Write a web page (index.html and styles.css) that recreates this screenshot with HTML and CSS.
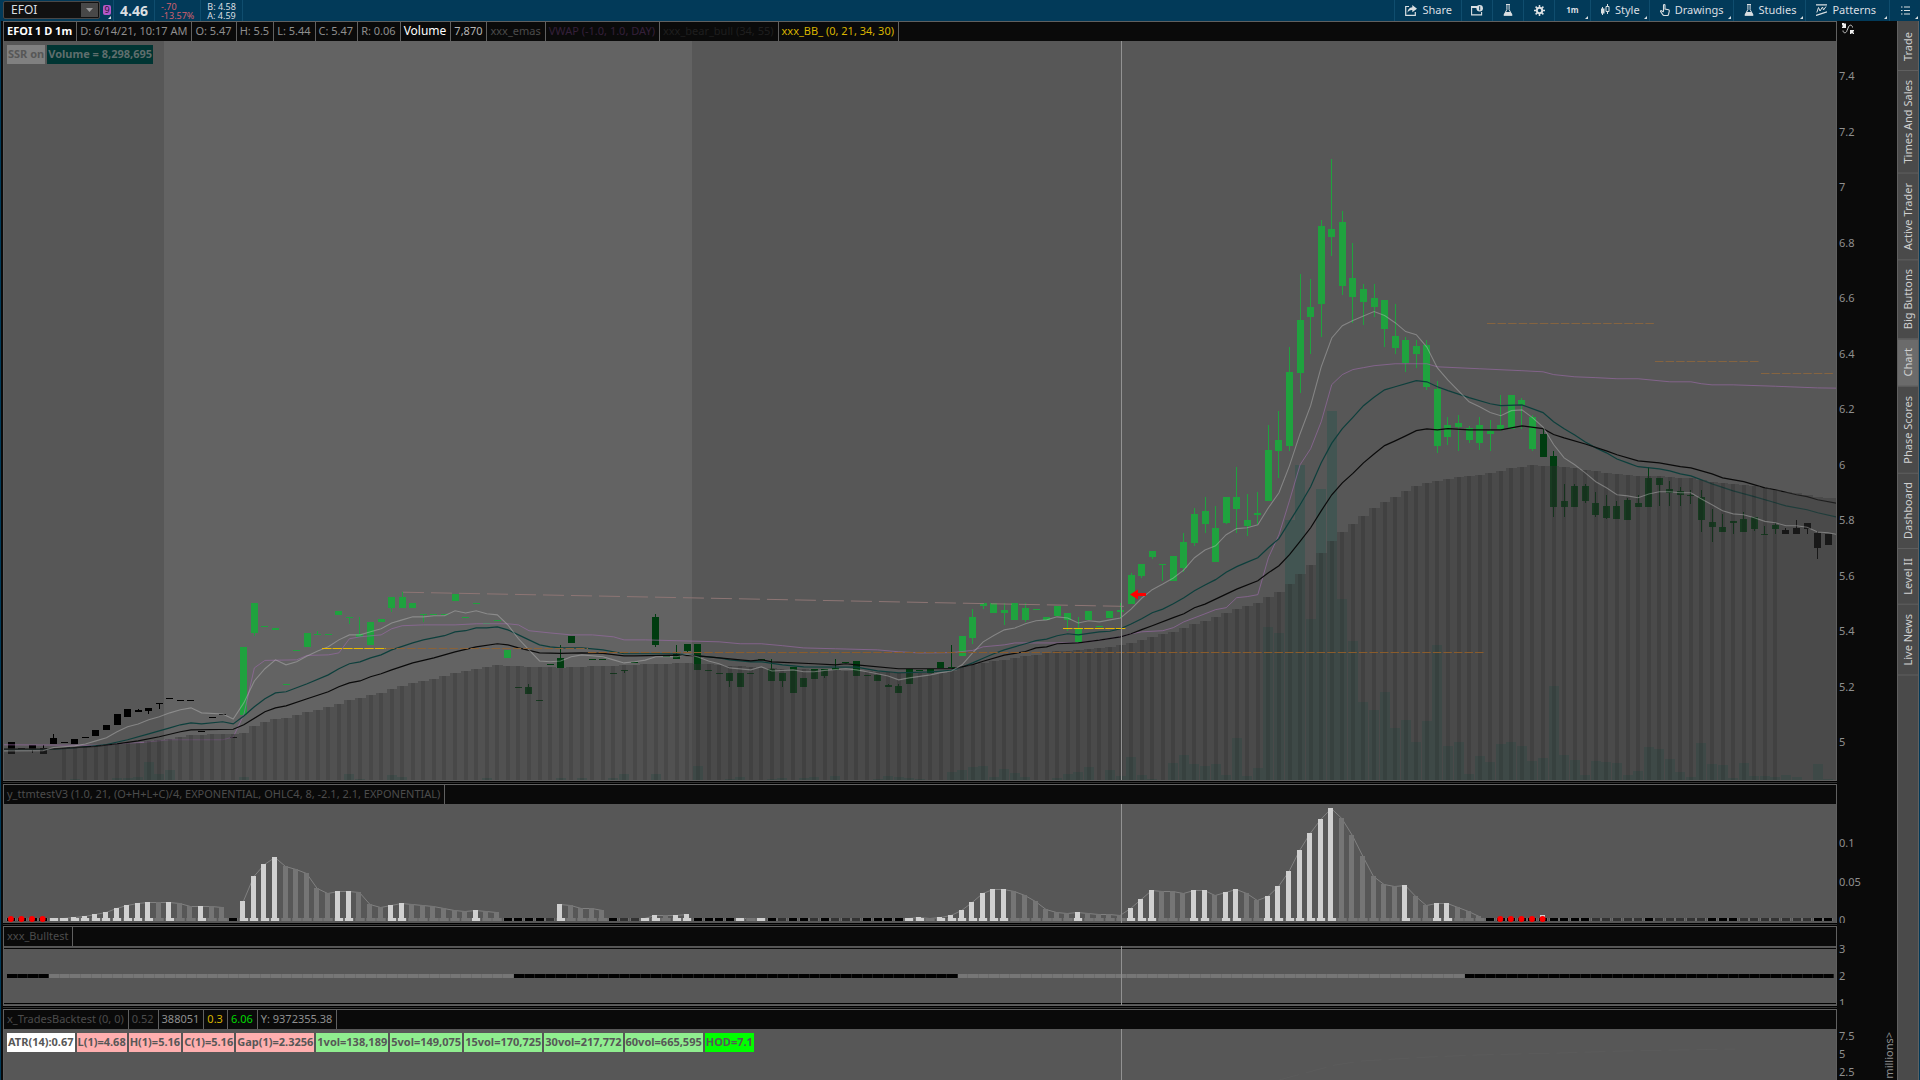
FILE: index.html
```html
<!DOCTYPE html>
<html lang="en">
<head>
  <meta charset="UTF-8">
  <title>EFOI 1 D 1m</title>
  <link rel="stylesheet" href="styles.css">
</head>
<body>
  <header class="topbar">
    <div class="symbol">
      <input type="text" value="EFOI" aria-label="Symbol">
      <button class="symbol-drop" aria-label="Recent symbols"><svg width="7" height="4" viewBox="0 0 7 4"><path d="M0 0h7L3.5 4z" fill="#999"/></svg></button>
    </div>
    <button class="link-badge" aria-label="Symbol link 9"><span>9</span></button>
    <div class="quote last">4.46</div>
    <div class="quote change"><span>-.70</span><span>-13.57%</span></div>
    <div class="quote bidask"><span>B: 4.58</span><span>A: 4.59</span></div>

    <nav class="tools">
      <button class="tool share">
        <svg width="12" height="11" viewBox="0 0 12 11"><path d="M4 1.5H.7v8.8h9.6V7" fill="none" stroke="currentColor" stroke-width="1.2"/><path d="M7.3 0L12 3.7 7.3 7.2V5.1C4.9 5 3.600 5.800 2.500 7.700 2.600 4.600 4.200 2.500 7.300 2.200z" fill="currentColor"/></svg>
        Share
      </button>
      <button class="tool icon" aria-label="Detach">
        <svg width="12" height="11" viewBox="0 0 12 11"><path d="M5.500 1.600H.6v8.300h10V7" fill="none" stroke="currentColor" stroke-width="1.1"/><path d="M0 1h6v2H0z" fill="currentColor"/><circle cx="8.700" cy="3.200" r="3.200" fill="currentColor"/><path d="M8.200 1.200h1v4h-1z" fill="#023a59"/></svg>
      </button>
      <button class="tool icon" aria-label="Edit studies">
        <svg width="10" height="12" viewBox="0 0 10 12"><path d="M3 .5h4M3.900.5v5L1 11h8L6.100 5.500v-5" fill="none" stroke="currentColor"/><path d="M2.400 8h5.200L9.500 11.800H.5z" fill="currentColor"/></svg>
      </button>
      <button class="tool icon" aria-label="Settings">
        <svg width="11" height="11" viewBox="0 0 11 11"><circle cx="5.500" cy="5.500" r="2.700" fill="none" stroke="currentColor" stroke-width="2"/><path d="M5.500 0v2M5.500 9v2M0 5.500h2M9 5.500h2M1.600 1.600l1.500 1.500M7.900 7.900l1.500 1.500M1.600 9.400l1.500-1.500M7.900 3.100l1.500-1.500" stroke="currentColor" stroke-width="1.500"/></svg>
      </button>
      <button class="tool menu frame">1m</button>
      <button class="tool menu">
        <svg width="9" height="12" viewBox="0 0 9 12"><path d="M1.500 3v8M6.500 0v10" stroke="currentColor"/><path d="M0 4.500h3.500v5H0z" fill="currentColor"/><path d="M5 2.500h3v5H5z" fill="#023a59" stroke="currentColor"/></svg>
        Style
      </button>
      <button class="tool menu">
        <svg width="10" height="12" viewBox="0 0 10 12"><path d="M3.500 7.500V1.300c0-1 1.500-1 1.500 0V5l3.500.8c.7.200.9.700.8 1.300L8.500 10.500c-.2.700-.5 1-1.200 1H4.200c-.6 0-1-.3-1.300-.7L.6 7.600c-.3-.8.600-1.300 1.200-.8l1.700 1.400" fill="none" stroke="currentColor" stroke-width="1.100"/></svg>
        Drawings
      </button>
      <button class="tool menu">
        <svg width="10" height="12" viewBox="0 0 10 12"><path d="M3 .5h4M3.900.5v5L1 11h8L6.100 5.500v-5" fill="none" stroke="currentColor"/><path d="M2.400 8h5.200L9.500 11.800H.5z" fill="currentColor"/></svg>
        Studies
      </button>
      <button class="tool menu patterns">
        <svg width="11" height="12" viewBox="0 0 11 12"><path d="M0 .8h11M0 11.500l11-3.700" stroke="currentColor" stroke-width="1.200"/><path d="M.8 8.500L2.500 3.500 4 7l2.500-4L7.500 6 10 2.500" fill="none" stroke="currentColor"/></svg>
        Patterns
      </button>
      <button class="tool menu icon" aria-label="Menu">
        <svg width="9" height="9" viewBox="0 0 9 9"><path d="M0 1h1.500M3 1h6M0 4.500h1.500M3 4.500h6M0 8h1.500M3 8h6" stroke="currentColor" stroke-width="1.200"/></svg>
      </button>
    </nav>
  </header>

  <div class="workspace">
    <main class="charts">
      <section class="panel price">
        <div class="left">
          <div class="legend">
            <span class="title">EFOI 1 D 1m</span>
            <span>D: 6/14/21, 10:17 AM</span>
            <span>O: 5.47</span>
            <span>H: 5.5</span>
            <span>L: 5.44</span>
            <span>C: 5.47</span>
            <span>R: 0.06</span>
            <span class="white">Volume</span>
            <span class="light">7,870</span>
            <span class="dim">xxx_emas</span>
            <span class="vwap">VWAP (-1.0, 1.0, DAY)</span>
            <span class="faint">xxx_bear_bull (34, 55)</span>
            <span class="yellow">xxx_BB_ (0, 21, 34, 30)</span>
          </div>
          <div class="plot">
            <svg id="price" viewBox="0 0 1832 739" preserveAspectRatio="none"></svg>
            <div class="chips">
              <span class="chip ssr">SSR on</span>
              <span class="chip vol">Volume = 8,298,695</span>
            </div>
          </div>
        </div>
        <div class="axis">
          <svg class="fit" width="12" height="12" viewBox="0 0 12 12"><path d="M0 0h2l1 1 1-1v5H0V4l1-1-1-1z" fill="#eee"/><path d="M8 7h4v1l-1 1 1 1v1h-1l-1-1-1 1H8z" fill="#eee"/><path d="M1 7.500c0 3 3.500 3 4 0L6.500 4c1-3 4-2 4 .5" fill="none" stroke="#ccc"/></svg>
          <span>7.4</span><span>7.2</span><span>7</span><span>6.8</span><span>6.6</span><span>6.4</span><span>6.2</span><span>6</span><span>5.8</span><span>5.6</span><span>5.4</span><span>5.2</span><span>5</span>
        </div>
      </section>

      <div class="divider"></div>

      <section class="panel ttm">
        <div class="left">
          <div class="legend">
            <span class="dim">y_ttmtestV3 (1.0, 21, (O+H+L+C)/4, EXPONENTIAL, OHLC4, 8, -2.1, 2.1, EXPONENTIAL)</span>
          </div>
          <div class="plot">
            <svg id="ttm" viewBox="0 0 1832 119" preserveAspectRatio="none"></svg>
          </div>
        </div>
        <div class="axis"><span>0.1</span><span>0.05</span><span>0</span></div>
      </section>

      <div class="divider"></div>

      <section class="panel bull">
        <div class="left">
          <div class="legend"><span class="dim">xxx_Bulltest</span></div>
          <div class="plot">
            <svg id="bull" viewBox="0 0 1832 60" preserveAspectRatio="none"></svg>
          </div>
        </div>
        <div class="axis"><span>3</span><span>2</span><span>1</span></div>
      </section>

      <div class="divider"></div>

      <section class="panel trades">
        <div class="left">
          <div class="legend">
            <span class="dim">x_TradesBacktest (0, 0)</span>
            <span class="dim">0.52</span>
            <span>388051</span>
            <span class="yellow">0.3</span>
            <span class="green">6.06</span>
            <span>Y: 9372355.38</span>
          </div>
          <div class="plot">
            <svg id="trades" viewBox="0 0 1832 51" preserveAspectRatio="none"></svg>
            <div class="chips">
              <span class="chip atr">ATR(14):0.67</span>
              <span class="chip pink">L(1)=4.68</span>
              <span class="chip pink">H(1)=5.16</span>
              <span class="chip pink">C(1)=5.16</span>
              <span class="chip pink">Gap(1)=2.3256</span>
              <span class="chip mint">1vol=138,189</span>
              <span class="chip mint">5vol=149,075</span>
              <span class="chip mint">15vol=170,725</span>
              <span class="chip mint">30vol=217,772</span>
              <span class="chip mint">60vol=665,595</span>
              <span class="chip hod">HOD=7.1</span>
            </div>
          </div>
        </div>
        <div class="axis"><span>7.5</span><span>5</span><span>2.5</span><em>millions&gt;</em></div>
      </section>
    </main>

    <aside class="tabs">
      <button>Trade</button>
      <button>Times And Sales</button>
      <button>Active Trader</button>
      <button>Big Buttons</button>
      <button class="active">Chart</button>
      <button>Phase Scores</button>
      <button>Dashboard</button>
      <button>Level II</button>
      <button>Live News</button>
    </aside>
  </div>

  <script src="script.js"></script>
</body>
</html>
```
FILE: styles.css
```css
* {
  box-sizing: border-box;
}

body {
  margin: 0;
  height: 100vh;
  overflow: hidden;
  display: flex;
  flex-direction: column;
  background: #0a0a0a;
  color: #8f8f8f;
  font-family: "Noto Sans", "Open Sans", sans-serif;
  font-size: 11px;
  line-height: 16px;
}

button, input {
  font: inherit;
  color: inherit;
  margin: 0;
}

button {
  border: none;
  background: none;
  padding: 0;
}

/* top bar */
.topbar {
  display: flex;
  flex: none;
  height: 21px;
  background: #023a59;
  color: #dadfe2;
}

.symbol {
  display: flex;
  width: 97px;
  height: 18px;
  margin: 1px 0 0 3px;
  background: #111;
  border: 1px solid #484848;
  border-radius: 2px;
}

.symbol input {
  flex: 1;
  min-width: 0;
  padding: 0 0 0 7px;
  border: none;
  background: none;
  font-size: 12px;
}

.symbol-drop {
  width: 17px;
  height: 14px;
  margin: 1px;
  background: #484848;
  display: flex;
  align-items: center;
  justify-content: center;
}

.link-badge {
  position: relative;
  width: 14px;
  border-right: 1px solid #0f4d6e;
}

.link-badge span {
  display: block;
  width: 8px;
  height: 10px;
  margin: -2px 0 0 3px;
  background: #b457c8;
  border-radius: 2px;
  color: #2c1435;
  font-size: 9px;
  line-height: 10px;
}

.link-badge::after,
.menu::after {
  content: "";
  position: absolute;
  right: 2px;
  bottom: 2px;
  border-left: 3px solid transparent;
  border-bottom: 3px solid #dadfe2;
}

.quote {
  display: flex;
  flex-direction: column;
  justify-content: center;
  padding: 0 6px;
  border-right: 1px solid #0f4d6e;
}

.quote span {
  font-size: 9px;
  line-height: 9px;
}

.last {
  font-size: 14px;
  font-weight: bold;
}

.change {
  color: #d2606e;
}

.tools {
  display: flex;
  margin-left: auto;
}

.tool {
  position: relative;
  display: flex;
  align-items: center;
  gap: 5px;
  padding: 0 9px 1px 10px;
  border-left: 1px solid #0f4d6e;
}

.tool.patterns {
  padding-right: 13px;
}

.tool.icon {
  width: 31px;
  justify-content: center;
  padding: 0 0 1px;
}

.tool.frame {
  width: 36px;
  justify-content: center;
  padding: 0 0 1px;
  font-size: 8px;
  font-weight: bold;
}

/* layout */
.workspace {
  flex: 1;
  min-height: 0;
  display: flex;
  padding: 0 1px;
  background: #023a59;
}

.charts {
  flex: 1;
  min-width: 0;
  display: flex;
  flex-direction: column;
  padding-left: 2px;
  background: #0a0a0a;
}

.panel {
  display: flex;
  flex: none;
}

.price {
  flex: 1;
  min-height: 0;
}

.ttm {
  height: 139px;
}

.bull {
  height: 80px;
}

.trades {
  height: 71px;
}

.left {
  flex: 1;
  min-width: 0;
  display: flex;
  flex-direction: column;
  border: 1px solid #606060;
  border-bottom: none;
}

.price .left,
.bull .left {
  border-bottom: 1px solid #606060;
}

.divider {
  height: 3px;
  margin-right: 60px;
  background: #303030;
  border-top: 1px solid #000;
  border-bottom: 1px solid #000;
}

.legend {
  display: flex;
  flex: none;
  height: 19px;
  line-height: 18px;
  white-space: nowrap;
}

.legend span {
  padding: 0 4px 0 3px;
  border-right: 1px solid #606060;
}

.legend .title {
  color: #fff;
  font-weight: bold;
}

.legend .white {
  color: #fff;
  font-size: 12px;
}

.legend .light {
  color: #b5b5b5;
}

.legend .dim {
  color: #4c4c4c;
}

.legend .vwap {
  color: #35203a;
}

.legend .faint {
  color: #1f1f1f;
}

.legend .yellow {
  color: #d8b400;
}

.legend .green {
  color: #00d800;
}

.plot {
  position: relative;
  flex: 1;
  min-height: 0;
  background: #575757;
}

.plot svg {
  display: block;
  position: absolute;
  width: 100%;
  height: 100%;
}

.chips {
  position: relative;
  display: flex;
  gap: 2px;
  padding: 4px 3px;
  white-space: nowrap;
}

.chip {
  height: 19px;
  padding: 0 1px;
  color: #575757;
  font-weight: bold;
  line-height: 18px;
}

.ssr {
  background: #808080;
}

.vol {
  background: #003533;
  color: #5f6e6d;
}

.atr {
  background: #fff;
}

.pink {
  background: #ffafaf;
}

.mint {
  background: #90ee90;
}

.hod {
  background: #0f0;
}

/* axis labels */
.axis {
  position: relative;
  width: 60px;
  padding-left: 2px;
  display: flex;
  flex-direction: column;
  justify-content: space-between;
  overflow: hidden;
}

.price .axis {
  padding-top: 47px;
  padding-bottom: 31px;
}

.ttm .axis {
  padding-top: 51px;
  padding-bottom: 0;
}

.ttm .axis span:last-child {
  margin-bottom: -5px;
}

.bull .axis {
  padding-top: 20px;
  margin-bottom: 1px;
}

.bull .axis span:first-child {
  margin-top: -5px;
}

.bull .axis span:nth-child(3) {
  margin-bottom: -6px;
}

.trades .axis {
  padding-top: 19px;
}

.axis .fit {
  position: absolute;
  left: 5px;
  top: 2px;
}

.axis em {
  position: absolute;
  right: 0;
  top: 23px;
  font-style: normal;
  writing-mode: vertical-rl;
  transform: rotate(180deg);
}

/* side tabs */
.tabs {
  display: flex;
  flex-direction: column;
  width: 22px;
  padding-top: 2px;
  border-left: 1px solid #606060;
  border-right: 1px solid #606060;
  background: #4a4a4a;
  color: #d0d0d0;
}

.tabs button {
  writing-mode: vertical-rl;
  transform: rotate(180deg);
  width: 20px;
  padding: 9px 0;
  border-top: 1px solid #606060;
}

.tabs .active {
  background: #6b6b6b;
}
```
FILE: script.js
```js
const NS = "http://www.w3.org/2000/svg";
const STEP = 10.563;
const barX = i => 7.4 + i * STEP;
// prices are in cents, 5.50 sits at 562px
const priceY = c => 562.3 - (c - 550) * 2.775;

function add(svg, tag, attrs) {
  const el = document.createElementNS(NS, tag);
  for (const key in attrs) el.setAttribute(key, attrs[key]);
  svg.appendChild(el);
  return el;
}

function rect(svg, x, y, w, h, fill, opacity) {
  return add(svg, "rect", { x: Math.round(x), y: Math.round(y), width: w, height: Math.round(h), fill, "fill-opacity": opacity || 1, "shape-rendering": "crispEdges" });
}

function hline(svg, x1, x2, y, color, dash) {
  add(svg, "line", { x1, x2, y1: Math.floor(y) + 0.5, y2: Math.floor(y) + 0.5, stroke: color, "stroke-dasharray": dash || "none" });
}

function crosshair(svg) {
  add(svg, "line", { x1: 1117.5, x2: 1117.5, y1: 0, y2: 800, stroke: "#929292" });
}

// "index:value" pairs
const parse = text => text.trim().split(/\s+/).map(p => p.split(":").map(Number));

function valueAt(points, i) {
  for (let k = 1; k < points.length; k++) {
    const [a, va] = points[k - 1];
    const [b, vb] = points[k];
    if (i <= b) return va + (vb - va) * (i - a) / (b - a);
  }
  return points[points.length - 1][1];
}

// one entry per bar: close, or top/bottom, or high/top/bottom/low
const candles = `
500/496 498/497.7 499/499/497.5/496 499/498/496/496 503/501.5/499.7/499.7 500 501/499.7 502 504.3/502.5 506/504.7
510/506.5 512/509.3 512/511.5/511.2/511.2 512.3/512.3/511.5/510 514/514/514/512 516 515 515 504 509
510 502 534.2/510 550/550/539.5/538 542 541/540.7 521 533 539.3/534.5 540/539/539/539
539 547.2/546 545/545/545/542.5 545/539/538.3/538.3 543.3/535.5 544.3/543.5 552.3/552.3/548.5/547 554/552.3/548.5/548.5 550/548.5 546/546/546/543
546 546 553.3/551.3 545 550 543 544 533.2/530.5 520 521/520/517.5/517.5
515 528 535/530.3/527/527 538.2/536 - 530 530 525 526/526/526/525 529
- 546/545/535.4/534 531 535/531.7/530.3/530.3 535.3/535.3/533/532 535.3/526.3 526 525 525/525/522.3/520 525/520.3
525 530 530/526.3/522.3/522.3 525/525/522.3/520 527/518 523/520.3 526.3/523.2 526.3/526.3/524/523 530/526.7/526.3/526.3 529
529.2/524.2 524 524/522.4 521/520.5/520.2/520.2 521/520.2/518/518 526.3/521.2 526 526.3/525.2 529/527 535/527/527/527
538.2/531.4 548/545/537.7/535.5 550/550/549.3/548 550/547 550/547.6/547/542 550/544.3 550/548.3/544.3/543 548 545/544.4 549/545.8
546.5/546.5/544.4/540 545/541/536.4/536.4 547.2/544.3 542 547.2/545 550/547.6/547.2/544.5 561/560.2/550/550 564.2/564.2/560.2/559 569/569/567/566 564/564/564/558
567/558.3 575.3/572/563/561.3 584.3/582.2/572/570.6 588.2/583.3/579/575.3 585/577/565.3/565.3 588.3/588.3/579.3/578.4 599/588.3/584.3/575.3 589.3/580/578.3/574.2 590/582.6/582.3/578.3 614.3/605.3/587.3/587.3
619.2/609/605.3/595 642.3/633.4/607/605 668.8/652/633.3/626 667/656.8/653.4/640 688/686/658.2/646 710/685/682.3/675 691.3/687.4/664.6/661 680/667.2/660.6/651.3 665/663.3/659/650.2 665/660/657.3/653
659.3/659.3/649.2/642.3 658/646.3/642.3/640 646/645/637/633.3 645/642.7/640.2/635 645/643/628.3/627 630/627.2/607/604 617/614.3/610.3/607 618/615/614/605 614/613.2/609.3/608 617/614.3/608/605
616/612/611.3/605 625/614.3/613.3/612 625/613.3 624/623.3/622/613 618/617/606/605 613/611/603.2/603.2 604.8/603/585/581 593/587/585/581 593/592.3/585/585 593/592.3/587.3/586
590/586/582.3/581 589/585/581/580.5 587/585/580.6/580.6 588/587.2/580.2/580.2 589/586/585/585 599/595/585/585 595/595/593/585 594/591.2/590/585 592/590.5/589.3/585 591/589/589/586
591/588.3/580.2/576 584/579.3/578/572 582/577.5/576/576 579.7/579.7/579.2/575 583/580.4/576/576 581/581/577.3/576 578/575/575/575 579/578.2/577/575 577/576.4/575.3/575.3 580/577/575.3/575.3
579/579/577.3/575 576/575.3/570.2/566 575/571.3`.trim().split(/\s+/);

function candleColor(i) {
  if (i < 22 || i > 167) return "#000";
  if ((i > 47 && i < 90) || i > 144) return "#003c10";
  return "#1fa23e";
}

const fast = parse(`-1:497 3:497.1 4:498.2 6:498.8 7:499.5 8:500.6 9:501.7 10:503.9 11:505.7 12:506.7 13:508.2 14:509.3 15:510.7 16:511.8 17:512.5
18:510.7 20:510.3 21:508.5 22:514.3 23:522.2 24:526.6 25:529.8 26:528 27:529.1 28:531.2 29:533 30:534.5 31:537 32:538.8 33:538.8 34:539.9 35:541
36:543.1 37:544.2 38:545.3 39:545.3 40:545.7 41:545.7 42:547.5 43:546.7 44:547.5 45:546.4 46:546 47:542.4 48:537.4 49:533.4 50:529.4 51:529.1 52:529.4
53:530.9 54:531.6 56:530.9 57:529.8 58:528.7 59:529.1 60:529.7 61:530.9 63:530.9 64:531.8 65:530.8 66:529.4 67:528.4 68:526.9 70:526.2 71:527.3 72:525.8
74:526.2 75:525.5 76:525.5 77:526 79:526.6 80:526.2 81:525.5 82:524.8 83:524 84:522.6 85:523.3 87:524.4 88:525.2 89:525.8 90:528 91:532.3 92:536.3
93:538.6 94:540.6 95:541.3 96:542.8 97:543.9 98:544.2 99:545.3 100:544.9 101:543.1 102:543.9 103:543.5 104:544.2 105:544.9 106:548.1 107:552 108:555.1
109:557.1 110:559.3 111:562.2 112:566.6 113:569.4 114:570.9 115:574.9 116:577.1 117:577.4 118:578.5 119:584.6 120:590 121:599.8 122:611.3 123:621.4
124:635.4 125:645.8 126:650.2 127:652.1 128:653.7 129:655.3 130:653.9 131:651.3 132:648.1 133:647 134:642.5 135:635 136:630.6 137:626.7 138:622.8
139:621 140:618.9 141:617.8 142:619.6 143:619.9 144:617.1 145:613.7 146:607.4 147:602.6 148:600.1 149:597.2 150:594 151:591.8 152:589.3 153:588.9
154:588.2 155:589.6 156:590.4 157:590.4 158:590 159:590 160:587.8 161:585.7 162:583.5 163:582.4 164:582.1 165:581 166:579.7 167:579.2 168:578.1
169:578.1 170:577.6 171:575.9 172:575.6 173:574.9`);

const mid = parse(`-1:497.4 4:497.5 6:498.1 9:499.3 11:501 13:503.1 15:505.3 16:506.4 17:507.1 18:506.7 20:507.5 21:506.7 22:509.6 23:512.9 24:515.8
25:517.9 26:518.3 28:521.2 30:524.4 31:526.6 32:528.4 33:529.1 34:530.5 35:531.6 36:533.4 38:535.9 39:537 41:538.5 42:539.9 43:540.3 44:541.3 45:541.3
46:541.7 47:540.6 48:538.8 50:535.2 51:534.5 52:534.1 54:534.1 56:533.4 58:532 63:532 65:531.2 67:530.5 68:529.8 70:529.1 71:529.1 73:528 75:527.3
80:527.2 82:525.8 84:525.1 87:525.5 89:526 90:527.2 91:528.7 92:530.4 93:532 94:533.4 96:535.6 97:536.7 98:537.3 99:538.5 100:539.2 101:538.8 103:539.9
104:540.1 105:541 106:542.7 107:544.6 108:546.8 109:548.1 110:550 111:552.2 112:554.7 113:556.8 114:558.7 115:561.4 116:563.4 117:565 118:566.6
119:570.2 120:573.5 121:579.6 122:585.7 123:592.2 124:600.8 125:607.9 126:613.1 127:617.2 128:621.4 129:624.4 130:627.1 131:628.2 133:630.4 134:630
135:628.2 136:626.8 138:624.3 140:622.1 141:621.4 143:621.7 145:618.9 146:615.6 147:613.1 148:610.8 149:608.3 150:606.2 151:604.4 152:602.2 153:600.8
154:599.4 156:598.6 157:597.9 158:596.8 159:596.1 161:593.2 163:590.7 165:588.6 167:586.4 168:585.3 170:583.9 171:582.8 173:581.1`);

const slow = parse(`-1:497.6 4:497.7 8:498.6 10:499.5 12:500.6 14:502.1 16:503.9 17:504.6 21:504.8 22:506.4 24:511.1 25:512.5 26:513.2 28:515.8 30:518.3
31:520.1 32:521.5 33:522.2 34:523.7 35:524.8 36:526.2 38:528.7 40:530.5 42:532.7 44:534.5 46:535.6 47:535.2 48:534.1 50:532.3 52:532.1 54:532.3 56:532.1
58:531.2 59:531.2 63:531.5 65:531.2 67:530.5 70:529.4 71:529.8 72:529.1 76:528.4 78:528 79:528.4 80:528 84:526.6 89:526.6 90:527.3 91:528.1 92:529.3
94:531.5 96:532.8 97:534.1 98:534.5 99:535.6 101:535.9 103:536.9 105:538.1 106:539.2 107:540.7 108:542.1 110:545 111:546.4 112:548.6 113:549.9 115:553.5
116:555.3 118:558.3 119:561.2 120:563.7 121:567.7 122:572.5 123:577.4 124:583.5 125:589.3 126:593.6 127:597 128:600.8 129:604 130:607 131:608.7
132:610.5 133:612.4 134:613 135:612.7 136:613.1 138:612.7 141:612.7 143:614.1 145:613.1 146:611 147:609.8 149:607.6 151:605.1 152:603.7 154:601.5
156:600.8 158:599.4 159:599 161:596.8 162:595.4 164:594 166:591.8 167:591.1 169:589.3 170:588.6 171:587.5 173:586.1`);

const vwap = parse(`-1:499.2 9:499 10:499.5 12:499.9 15:501 20:501 21:502 22:510 23:526.9 24:529.6 27:529.8 28:531.4 30:531.6 31:532.3 32:537.4 33:538.1
35:538.8 36:541 37:542.1 39:542.4 42:542.4 44:542.8 47:542.8 48:542.4 49:540.3 51:539.5 53:538.8 55:538.8 57:538.1 58:537 60:537 63:536.7 67:536.3 69:535.6
71:535.6 73:534.9 75:534.1 78:533.8 82:533.4 84:532.7 86:532.3 89:532.4 91:533.2 92:534.5 94:535.2 95:535.9 101:535.9 103:536.9 105:538.1 106:539.2
107:539.9 109:540.3 110:541.4 111:543.5 113:546.4 114:547.9 115:548.6 116:552.2 117:552.6 118:553.3 119:566.6 120:574.9 121:587.2 122:600.1 123:605.9
124:615.6 125:629 126:632.6 127:634.4 128:635.1 129:635.8 131:636.5 134:636.5 135:635.4 139:634.7 143:634 145:633.6 146:632.6 148:631.8 150:631.5
152:631.1 154:631.1 157:630 159:630 160:629.3 161:628.9 163:628.9 167:628.4 171:627.8 173:627.7`);

const cloud = parse(`-1:497.7 5:497.9 8:498.6 10:499.3 12:499.8 14:500.6 16:501.7 17:502.5 19:502.9 22:503.1 23:505.7 24:507.1 25:508.2 26:508.5 28:510.7
30:512.5 32:515 34:516.8 35:517.5 36:519 38:521.2 40:522.6 42:524.8 44:526.2 46:527.6 48:527.3 52:526.8 54:527.2 58:527.6 60:528 64:528.5 66:528 68:527.5
72:526.6 76:526 80:525.7 84:525 88:525 89:525.5 90:527 91:527.8 93:529.1 96:531 98:532 99:532.7 101:533.2 103:533.8 105:535 106:535.6 108:537.9 110:539.7
113:543.7 116:547.9 118:550 119:552.2 120:554 121:557 122:560.6 123:563.7 124:568 125:572.4 126:575.6 127:578.5 128:581.4 129:584.3 130:586.4 132:590.5
133:592.3 135:594.1 137:595.4 140:596.8 142:598.7 144:599.8 146:599.5 148:598.7 150:597.6 152:596.5 154:595.9 156:595.9 159:595 160:594.3 163:592.9
165:592.1 167:590.7 169:589.6 171:588.2 173:587.4`);

const volume = parse(`6:1 10:2 11:2 12:3 13:18 14:6 15:10 22:3 32:6 33:1 36:5 37:3 45:2 52:2 54:2 57:2 58:6 61:6 65:14 68:1 69:3 72:1 73:2 75:2 76:3 78:4
82:1 83:4 84:3 85:2 86:1 89:8 90:10 91:13 92:14 93:3 94:11 95:7 96:3 99:2 100:6 101:8 102:13 104:10 105:4 106:23 107:5 108:1 110:17 111:25 112:16 113:14
114:16 115:5 116:42 117:4 118:12 119:153 120:147 121:260 122:315 123:161 124:291 125:369 126:181 127:139 128:78 129:70 130:88 131:52 132:60 133:38 134:59
135:135 136:34 137:38 138:6 139:24 140:18 141:36 142:38 143:34 144:19 145:22 146:94 147:25 148:20 149:5 150:19 151:18 152:17 153:5 154:9 155:33 156:31
157:21 158:8 159:3 160:37 161:16 162:15 163:2 164:17 165:4 166:4 167:3 168:5 169:3 171:16 172:1`);

function drawPrice() {
  const svg = document.getElementById("price");

  // premarket session
  rect(svg, 160, 0, 528, 739, "#636363");

  // volume
  volume.forEach(([i, h]) => rect(svg, barX(i) - 5, 739 - h, 10, h, "#004e41", 0.24));

  // candles
  candles.forEach((text, i) => {
    if (text === "-") return;
    const v = text.split("/").map(Number);
    const [high, top, bottom, low] = v.length === 4 ? v : [v[0], v[0], v[v.length - 1], v[v.length - 1]];
    const x = barX(i);
    const color = candleColor(i);
    const y = Math.round(priceY(top));
    rect(svg, x - 3.5, y, 7, Math.max(1, Math.round(priceY(bottom)) - y + 1), color);
    if (high !== low) rect(svg, x - 0.5, priceY(high), 1, priceY(low) - priceY(high), color);
  });

  // lines
  const poly = (points, color, width, opacity) => add(svg, "polyline", {
    points: points.map(([i, c]) => barX(i) + "," + (priceY(c) + 0.5)).join(" "),
    fill: "none", stroke: color, "stroke-width": width, "stroke-opacity": opacity
  });
  poly(vwap, "#9a6aa6", 1, 0.65);
  poly(mid, "#0d3f3c", 1.2, 1);
  poly(slow, "#0a0a0a", 1.2, 1);

  // cloud under the moving averages
  for (let i = 0; i <= 172; i++) {
    const x = i ? Math.round(barX(i) - 5) : 0;
    const right = i === 172 ? 1832 : Math.round(barX(i + 1) - 5);
    const y = Math.round(priceY(valueAt(cloud, i)));
    rect(svg, x, y, right - x, 739 - y, "#3a3a3a", 0.42);
    if (i > 4 && i < 168) rect(svg, barX(i) - 2, y, 4, 739 - y, "#000", 0.11);
  }
  poly(fast, "#bdbdbd", 1.1, 0.45);

  // levels
  add(svg, "line", { x1: 399, x2: 1120, y1: priceY(554), y2: priceY(548.9), stroke: "#8d7574", "stroke-dasharray": "21 7" });
  const dash = "8.5 2.06";
  hline(svg, 382, 584, priceY(533.8), "#8a6238", dash);
  hline(svg, 584, 1480, priceY(532.3), "#8a5c2c", dash);
  hline(svg, 1483, 1650, priceY(650.9), "#856440", dash);
  hline(svg, 1651, 1756, priceY(637.2), "#856440", dash);
  hline(svg, 1757, 1830, priceY(632.9), "#856440", dash);
  hline(svg, 318, 382, priceY(533.8), "#e8b800", "9.5 1.06");
  hline(svg, 1059, 1122, priceY(541), "#e8b800", "9.5 1.06");

  crosshair(svg);
  add(svg, "path", { d: "M1126 553.4l8-5v3.500h8v3h-8v3.500z", fill: "#f00" });
}

// colour letter (w g d k r) and bar height
const momentum = `r r r r w w w4 w5 w7 w9 w13 w16 w18 w19 g19 w19 g18 g15 w15 g15 g14 k w20 w45 w57 w64 g55 g52 g48 g33 g28 w30 w30 g29 g17 g14 w16 w18
g17 g16 g15 g13 g11 g10 w11 g10 g9 k k k k d w17 g16 g13 g13 g11 k d d w w6 g6 w6 w7 k k k k w g w k d k k d k d d d k k k k w w4 g w4 w6 w11 w19 w28
w32 w32 g30 g26 g20 g12 g9 g8 w9 g8 g7 g7 g6 w13 w22 w31 g30 g30 g28 w31 w31 g26 w29 w32 g28 g21 w25 w35 w50 w71 w88 w102 w113 g103 g86 g65 g45 g37 g35
w36 g25 g16 w18 w18 g14 g10 g5 k r r r r r6 k k k k d d d d d k d d d d d k k k d d d d d d d k k`.trim().split(/\s+/);

const shades = { w: "#d0d0d0", g: "#757575", d: "#323232", k: "#000", r: "#000" };

function drawMomentum() {
  const svg = document.getElementById("ttm");
  let run = [];
  const flush = () => {
    if (run.length > 1) add(svg, "polyline", { points: run.join(" "), fill: "none", stroke: "#808080" });
    run = [];
  };
  momentum.forEach((m, i) => {
    const kind = m[0];
    const h = Number(m.slice(1)) || 3;
    if (kind === "w" || kind === "g") run.push((barX(i) - 0.5) + "," + (117.5 - h));
    else flush();
  });
  flush();
  momentum.forEach((m, i) => {
    const kind = m[0];
    const h = Number(m.slice(1));
    const x = barX(i) - 4;
    rect(svg, x - 1, 114, 10, 3, "#6c6c6c");
    rect(svg, x, 114, 8, 3, shades[kind]);
    if (h) rect(svg, x + 0.5, 117 - h, 5, h, kind === "r" ? "#d0d0d0" : shades[kind]);
  });
  momentum.forEach((m, i) => {
    if (m[0] === "r") add(svg, "circle", { cx: barX(i) - 0.5, cy: 115, r: 3, fill: "#f00" });
  });
  crosshair(svg);
}

function drawBull() {
  const svg = document.getElementById("bull");
  hline(svg, 0, 1832, 2, "#000");
  hline(svg, 0, 1832, 58, "#000");
  for (let i = 0; i <= 172; i++) {
    const up = (i > 3 && i < 48) || (i > 89 && i < 138);
    const x = Math.round(barX(i) - 4.4);
    const next = Math.min(1831, Math.round(barX(i + 1) - 4.4));
    rect(svg, x, 28, next - x, 5, up ? "#6c6c6c" : "#1c1c1c");
    rect(svg, x, 28, next - x - 1, 5, up ? "#767676" : "#000");
  }
  crosshair(svg);
}

function drawTrades() {
  const svg = document.getElementById("trades");
  add(svg, "polyline", { points: "1275,51 1331,36 1358,32 1425,28 1473,26 1556,24 1619,22 1731,20", fill: "none", stroke: "#5b5b5b", "stroke-dasharray": "21 7" });
  crosshair(svg);
}

drawPrice();
drawMomentum();
drawBull();
drawTrades();
```
